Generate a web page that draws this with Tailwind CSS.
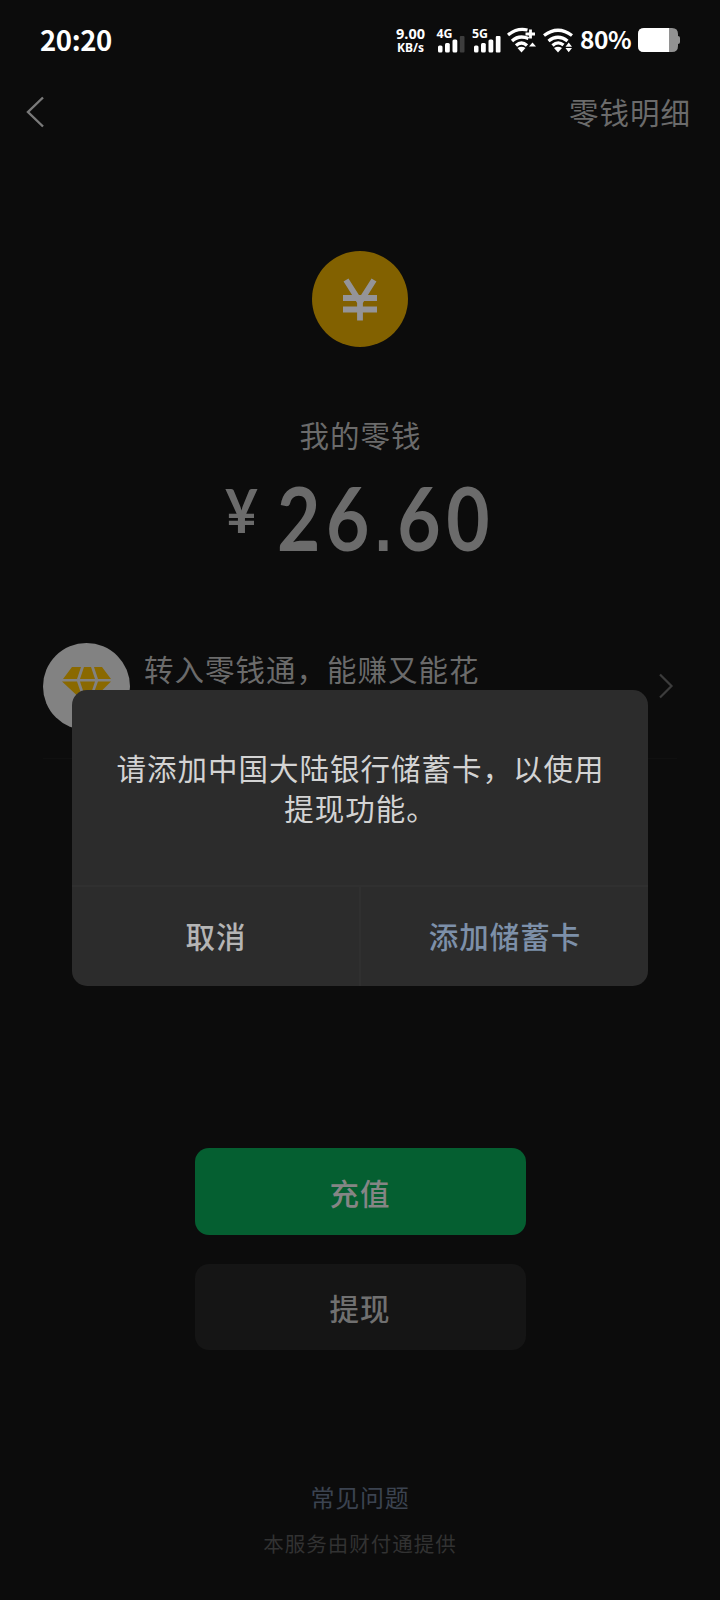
<!DOCTYPE html>
<html lang="zh-CN">
<head>
<meta charset="utf-8">
<title>零钱</title>
<script src="https://cdn.jsdelivr.net/npm/@tailwindcss/browser@4"></script>
</head>
<body class="bg-[#0c0c0c]">
<div class="relative flex h-[1600px] w-[720px] flex-col items-center overflow-hidden bg-[#0c0c0c] font-['Noto_Sans_CJK_SC',sans-serif] text-[29.5px] leading-[40px] tracking-[1px] text-[#6b6b6b]">
  <header class="flex h-20 w-full shrink-0 items-center justify-between pr-10 pl-10 text-white">
    <div class="pb-[3px] text-[27.5px] leading-[40px] font-bold tracking-[-0.4px]">20:20</div>
    <div class="flex items-center">
      <div class="mr-[10px] w-[31px] pt-px text-center font-['Noto_Sans',sans-serif] font-bold tracking-[0px]"><div class="text-[14.5px] leading-[15px]">9.00</div><div class="text-[12px] leading-[14px]">KB/s</div></div>
      <svg class="mr-[7px] overflow-visible" width="29" height="26" viewBox="0 0 29 26" fill="#fff"><text x="0.500" y="11" font-family="Noto Sans" font-weight="700" font-size="12.5" textLength="16" lengthAdjust="spacingAndGlyphs" letter-spacing="0">4G</text><rect x="2" y="18.500" width="4.500" height="7" rx="1.500"/><rect x="9" y="16" width="4.800" height="9.500" rx="1.500"/><rect x="16.500" y="12.500" width="4.800" height="13" rx="1.500"/><rect x="23.800" y="9" width="4.700" height="16.500" rx="1" fill="#3d3d3d"/></svg>
      <svg class="mr-[6px] overflow-visible" width="29" height="26" viewBox="0 0 29 26" fill="#fff"><text x="0" y="11" font-family="Noto Sans" font-weight="700" font-size="12.5" textLength="16" lengthAdjust="spacingAndGlyphs" letter-spacing="0">5G</text><rect x="2" y="18.500" width="4.500" height="7" rx="1.500"/><rect x="9" y="16" width="4.800" height="9.500" rx="1.500"/><rect x="16.500" y="12.500" width="4.800" height="13" rx="1.500"/><rect x="23.800" y="9" width="4.700" height="16.500" rx="1"/></svg>
      <svg class="mr-[7px]" width="29" height="26" viewBox="0 0 29 26" fill="none" stroke="#fff" stroke-width="3.300"><path d="M1 8Q10 .5 20.500 3"/><path d="M5 14Q12 7.500 21.500 11.500"/><path d="M9 18.500Q14.500 13.500 20 18.500"/><path d="M10.500 21Q14.500 18.500 18.500 21L14.500 25.500Z" fill="#fff" stroke="none"/><path d="M18.500 7H28M23.500 2.500V11.500" stroke-width="2.800"/><path d="M22 19.500L25.500 15.500L29 19.500Z" fill="#fff" stroke="none"/></svg>
      <svg class="mr-[7px]" width="30" height="26" viewBox="0 0 30 26" fill="none" stroke="#fff" stroke-width="3.300"><path d="M1 8.500Q15 -2 29 8.500"/><path d="M5.500 14Q15 6.500 24.500 14"/><path d="M9.500 18.500Q15 13.500 20.500 18"/><path d="M11 21Q15 18.500 19 21L15 25.500Z" fill="#fff" stroke="none"/><path d="M22.500 19.800L25.700 15.500L29 19.800Z M22.500 21L25.700 25.300L29 21Z" fill="#fff" stroke="none"/></svg>
      <div class="mr-[6px] w-[52px] pb-[2px] text-[24.5px] leading-[40px] font-bold tracking-[-0.4px]">80%</div>
      <svg width="42" height="24" viewBox="0 0 42 24"><path d="M6 0H34Q40 0 40 6V8Q42 8 42 10V14Q42 16 40 16V18Q40 24 34 24H6Q0 24 0 18V6Q0 0 6 0Z" fill="#929292"/><path d="M6 0H31V24H6Q0 24 0 18V6Q0 0 6 0Z" fill="#fff"/></svg>
    </div>
  </header>
  <nav class="flex h-[62px] w-full shrink-0 items-center justify-between pr-[29px] pl-[26px]">
    <svg class="mt-[2px]" width="20" height="32" viewBox="0 0 20 32" fill="none" stroke="#7a7a7a" stroke-width="2.400"><path d="M17 1.500L2 16L17 30.500"/></svg>
    <span class="pb-px">零钱明细</span>
  </nav>
  <svg class="mt-[109px] shrink-0" width="96" height="96" viewBox="0 0 96 96"><circle cx="48" cy="48" r="48" fill="#826100"/><path d="M34 29L48 51L62 29M31 47H65M31 58.500H65M48 47V69.500" fill="none" stroke="#949498" stroke-width="5.800"/></svg>
  <div class="mt-[67px] shrink-0 pl-px">我的零钱</div>
  <div class="mt-[21px] flex h-[90px] w-[720px] shrink-0 items-start pl-[225px] font-['Lato',sans-serif] font-bold">
    <span class="mt-[3px] mr-[17px] w-[35px] origin-left scale-x-[0.93] text-[61px] leading-[64px] tracking-[0px]">¥</span><span class="origin-left scale-x-[0.85] text-[88px] leading-[84px] tracking-[6.5px]">26<span class="font-['Liberation_Sans',sans-serif] text-[72px] leading-[1px]">.</span>60</span>
  </div>
  <section class="mt-[73px] flex h-[121px] w-[634px] shrink-0 items-start border-b border-[#101010]">
    <svg class="mt-[5px] shrink-0" width="87" height="87" viewBox="0 0 87 87"><circle cx="43.500" cy="43.500" r="43.500" fill="#828282"/><path d="M29 24H38L34 36H20ZM41 24H48L52 36H37ZM51 24H59L68 36H55ZM19 38.500H34L41 59ZM37 38.500H52L44.500 61ZM55 38.500H68L47.500 59Z" fill="#8a6900"/></svg>
    <span class="ml-[14px] grow pt-[10px]">转入零钱通，能赚又能花</span>
    <svg class="mt-[35px] mr-[3px] shrink-0" width="16" height="26" viewBox="0 0 16 26" fill="none" stroke="#3c3c3c" stroke-width="2.200"><path d="M2 1.500L13.500 13L2 24.500"/></svg>
  </section>
  <button class="mt-[389px] h-[87px] w-[331px] shrink-0 rounded-[14px] bg-[#055f31] font-medium tracking-[1px] text-[#858585]">充值</button>
  <button class="mt-[29px] h-[86px] w-[331px] shrink-0 rounded-[14px] bg-[#151515] font-medium tracking-[1px] text-[#707070]">提现</button>
  <a class="mt-[130px] shrink-0 text-[24px] leading-[34px] tracking-[0.8px] text-[#3b4350]">常见问题</a>
  <p class="mt-[15px] shrink-0 text-[20.5px] leading-[28px] tracking-[1px] text-[#323232]">本服务由财付通提供</p>

  <div role="dialog" class="absolute top-[690px] left-[72px] flex h-[296px] w-[576px] flex-col rounded-[15px] bg-[#2c2c2c]">
    <p class="h-[195px] pt-[57px] pl-px text-center text-[#d3d3d3]">请添加中国大陆银行储蓄卡，以使用<br>提现功能。</p>
    <div class="flex grow border-t-2 border-[#303030] font-medium">
      <div class="flex w-[289px] items-center justify-center border-r-2 border-[#303030] pb-[3px] pl-px text-[#b5b5b5]">取消</div>
      <div class="flex grow items-center justify-center pb-[3px] pl-px text-[#7d90a9]">添加储蓄卡</div>
    </div>
  </div>
</div>
</body>
</html>
